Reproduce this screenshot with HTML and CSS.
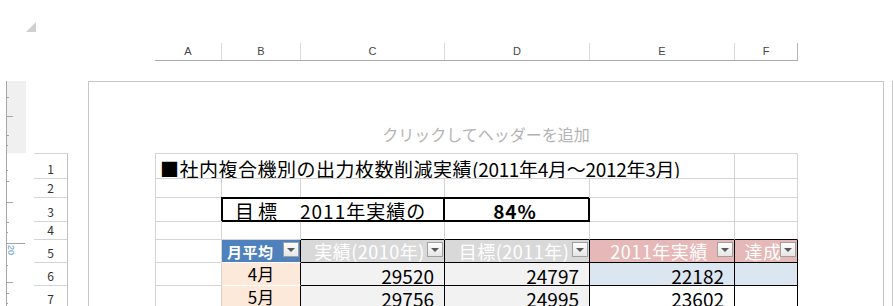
FILE: index.html
```html
<!DOCTYPE html>
<html lang="ja">
<head>
    <meta charset="UTF-8">
    <title>出力枚数削減実績</title>
    <link rel="stylesheet" href="styles.css">
</head>
<body>
    <div class="top"><div class="corner"></div></div>
    <div class="colhead">
        <div class="ch ca">A</div>
        <div class="ch cb">B</div>
        <div class="ch cc">C</div>
        <div class="ch cd">D</div>
        <div class="ch ce">E</div>
        <div class="ch cf">F</div>
    </div>
    <div class="main">
        <svg class="ruler" width="20" height="225" viewBox="0 0 20 225">
            <rect x="0" y="0" width="20" height="72" fill="#f0f0f0"/>
            <line x1="0.5" y1="0" x2="0.5" y2="225" stroke="#a6a6a6"/>
            <path stroke="#a6a6a6" d="M0 16.5h3M0 54.5h3M0 64.5h2M0 89.5h2M0 100.5h3M0 141.5h3M0 151.5h2M0 184.5h2M0 212.5h3M0 222.5h2M0 35.5h7M0 121.5h7M0 201.5h7M0 162.5h19"/>
            <text x="2" y="164" transform="rotate(90 2 164)" font-size="9" font-family="Liberation Sans" fill="#5b9bd5">20</text>
        </svg>
        <div class="rownums">
            <div class="rows">
                <div class="rn r1">1</div>
                <div class="rn r2">2</div>
                <div class="rn r3">3</div>
                <div class="rn r4">4</div>
                <div class="rn r5">5</div>
                <div class="rn r6">6</div>
                <div class="rn r7">7</div>
            </div>
        </div>
        <div class="page">
            <div class="pghead">クリックしてヘッダーを追加</div>
            <div class="sheet">
                <!-- 1 -->
                <div class="c title">■社内複合機別の出力枚数削減実績<span class="paren">(2011年4月～2012年3月)</span></div>
                <div class="c"></div>
                <!-- 2 -->
                <div class="c"></div><div class="c"></div><div class="c"></div>
                <div class="c"></div><div class="c"></div><div class="c"></div>
                <!-- 3 -->
                <div class="c"></div>
                <div class="c box box1"><span class="goal">目標</span><span>2011年実績の</span></div>
                <div class="c box box2">84%</div>
                <div class="c"></div><div class="c"></div>
                <!-- 4 -->
                <div class="c"></div><div class="c"></div>
                <div class="c bb"></div><div class="c bb"></div><div class="c bb"></div><div class="c bb"></div>
                <!-- 5 -->
                <div class="c"></div>
                <div class="c hd hd-blue">月平均<i class="dd"></i></div>
                <div class="c hd hd-gray">実績(2010年)<i class="dd"></i></div>
                <div class="c hd hd-gray">目標(2011年)<i class="dd"></i></div>
                <div class="c hd hd-pink">2011年実績<i class="dd"></i></div>
                <div class="c hd hd-pink">達成<i class="dd"></i></div>
                <!-- 6 -->
                <div class="c"></div>
                <div class="c mon">4月</div>
                <div class="c num gray">29520</div>
                <div class="c num gray">24797</div>
                <div class="c num blue">22182</div>
                <div class="c num blue"></div>
                <!-- 7 -->
                <div class="c"></div>
                <div class="c mon">5月</div>
                <div class="c num gray">29756</div>
                <div class="c num gray">24995</div>
                <div class="c num">23602</div>
                <div class="c num"></div>
            </div>
        </div>
        <div class="nextpage"></div>
    </div>
</body>
</html>
```

FILE: styles.css
```css
body {
    margin: 0;
    width: 893px;
    height: 306px;
    overflow: hidden;
    background: #fff;
    font-family: "Noto Sans CJK JP", sans-serif;
}
.top {
    height: 43px;
    box-sizing: border-box;
    padding: 22px 0 0 26px;
}
.corner {
    width: 10px;
    height: 10px;
    background: #d0d0d0;
    clip-path: polygon(100% 0, 100% 100%, 0 100%);
}
.colhead {
    display: flex;
    margin-left: 155px;
    height: 17px;
    border-bottom: 1px solid #ababab;
    width: max-content;
}
.ch {
    box-sizing: border-box;
    border-right: 1px solid #dadada;
    text-align: center;
    font: 11px/17px "Liberation Sans", sans-serif;
    color: #444;
}
.ca { width: 67px; }
.cb { width: 79px; }
.cc { width: 144px; }
.cd { width: 145px; }
.ce { width: 145px; }
.cf { width: 63px; border-right-color: #b4b4b4; }

.main {
    display: flex;
    margin-top: 20px;
    height: 225px;
}
.ruler {
    display: block;
    flex: none;
    margin-left: 6px;
}
.rownums {
    margin-left: 8px;
    width: 34px;
    padding-top: 72px;
}
.rows {
    border-top: 1px solid #d4d4d4;
    border-right: 1px solid #c0c0c0;
}
.rn {
    box-sizing: border-box;
    border-bottom: 1px solid #d4d4d4;
    display: flex;
    align-items: flex-end;
    justify-content: center;
    padding-bottom: 2px;
    font-size: 12px;
    line-height: 14px;
    color: #333;
}
.r1 { height: 25px; }
.r2 { height: 19px; }
.r3 { height: 24px; }
.r4 { height: 18px; }
.r5 { height: 23px; }
.r6 { height: 23px; }
.r7 { height: 23px; }

.page {
    margin-left: 20px;
    width: 796px;
    box-sizing: border-box;
    border: 1px solid #c8c8c8;
    border-bottom: none;
}
.pghead {
    height: 71px;
    box-sizing: border-box;
    padding-top: 40px;
    text-align: center;
    font-size: 16px;
    line-height: 24px;
    color: #b4b4b4;
}
.nextpage {
    margin-left: 8px;
    border-left: 1px solid #c8c8c8;
}

.sheet {
    display: grid;
    grid-template-columns: 66px 79px 144px 145px 145px 63px;
    grid-template-rows: 25px 19px 24px 18px 23px 23px 23px;
    margin-left: 66px;
    width: max-content;
    border-top: 1px solid #d4d4d4;
    border-left: 1px solid #d4d4d4;
}
.c {
    box-sizing: border-box;
    border-right: 1px solid #d4d4d4;
    border-bottom: 1px solid #d4d4d4;
    display: flex;
    align-items: flex-end;
    min-width: 0;
    overflow: hidden;
    white-space: nowrap;
    color: #000;
}
.title {
    grid-column: 1 / 6;
    padding-left: 4px;
    font-size: 19px;
    line-height: 19px;
    letter-spacing: 0.5px;
}
.paren {
    letter-spacing: -0.3px;
}

/* 目標ボックス */
.box {
    border: 1px solid #000;
    box-shadow: -1px -1px 0 #000, inset -1px -1px 0 #000;
    font-size: 19px;
    line-height: 19px;
    padding-bottom: 1px;
    letter-spacing: 1px;
}
.box1 {
    grid-column: 2 / 4;
}
.goal {
    width: 77px;
    padding-left: 12px;
    box-sizing: border-box;
    letter-spacing: 4px;
}
.box2 {
    border-left: none;
    justify-content: center;
    padding-right: 4px;
    font-weight: bold;
}
.bb {
    border-bottom-color: #000;
}

/* テーブル */
.hd {
    position: relative;
    align-items: center;
    justify-content: center;
    color: #fff;
    font-size: 18px;
    letter-spacing: 0.5px;
    padding-right: 6px;
    border-right-color: #000;
    border-bottom-color: #000;
}
.hd-blue {
    background: #4f81bd;
    justify-content: flex-start;
    padding-left: 5px;
    font-size: 15px;
    font-weight: bold;
    border-bottom-color: #fff;
}
.hd-gray { background: #d9d9d9; }
.hd-pink { background: #e6b8b7; }
.dd {
    position: absolute;
    right: 1px;
    top: 2px;
    width: 16px;
    height: 15px;
    box-sizing: border-box;
    border: 1px solid #a0a0a0;
    background: linear-gradient(#fdfdfd, #e6e6e6);
}
.dd::after {
    content: "";
    position: absolute;
    left: 3px;
    top: 5px;
    border-left: 4px solid transparent;
    border-right: 4px solid transparent;
    border-top: 4px solid #595959;
}
.mon {
    background: #fde9d9;
    justify-content: center;
    font-size: 17px;
    line-height: 20px;
    padding-bottom: 1px;
    border-right-color: #000;
    border-bottom-color: #fff;
}
.num {
    justify-content: flex-end;
    padding-right: 10px;
    font-size: 19px;
    line-height: 19px;
    border-right-color: #000;
    border-bottom-color: #000;
}
.gray { background: #f2f2f2; }
.blue { background: #dce6f1; }
```
